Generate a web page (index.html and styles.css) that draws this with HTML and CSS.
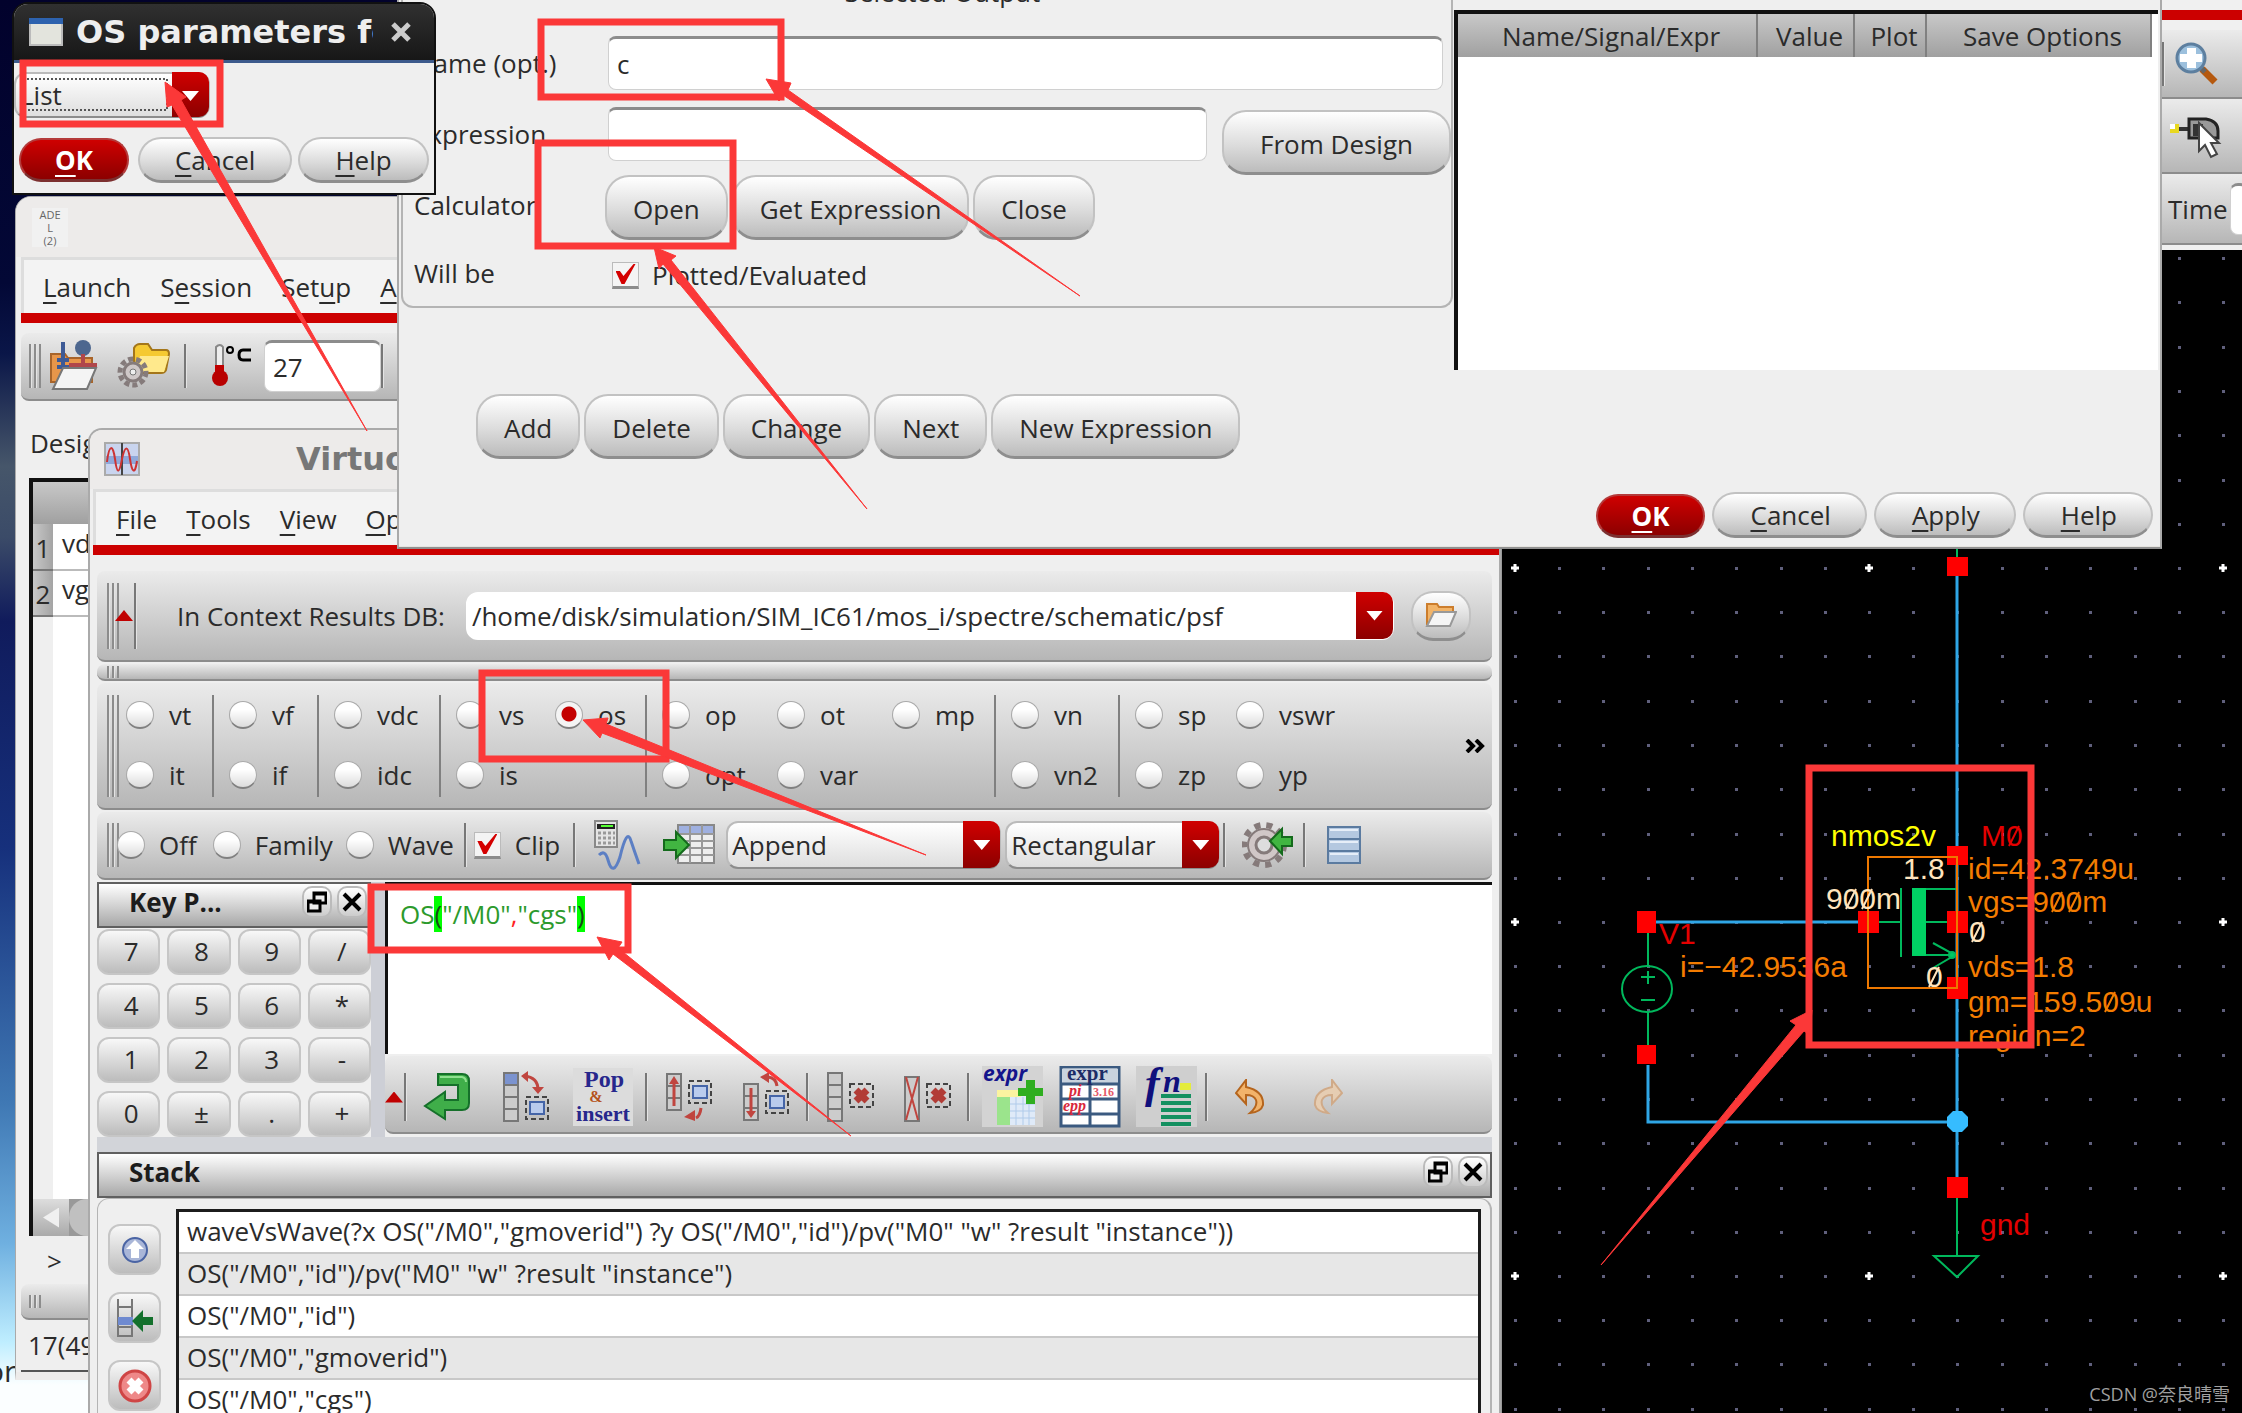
FILE: index.html
```html
<!DOCTYPE html>
<html lang="en">
<head>
<meta charset="utf-8">
<title>Virtuoso calculator</title>
<link rel="stylesheet" href="styles.css">
</head>
<body>
<main class="desktop">
  <span class="desktop-label">or</span>

  <!-- Schematic editor -->
  <section class="window schematic">
    <div class="schematic-tools">
      <div class="schematic-stripe"></div>
      <div class="schematic-bar"><span class="sep"></span>
        <svg class="icon-zoom" width="44" height="46" viewBox="0 0 44 46"><path d="M27 28l13 13" stroke="#b5590f" stroke-width="7"/><path d="M25 26l5 5" stroke="#666" stroke-width="5"/><circle cx="16" cy="17" r="14" fill="#9cc0dd" stroke="#5d7f9f" stroke-width="3"/><path d="M12 7h9v6h6v8h-6v6h-9v-6H5v-8h7z" fill="#fff"/></svg>
      </div>
      <div class="schematic-bar">
        <svg class="icon-probe" width="54" height="46" viewBox="0 0 54 46"><path d="M10 16h12" stroke="#333" stroke-width="4"/><path d="M2 11h9v9H2z" fill="#e8d820"/><path d="M2 11h5v5H2z" fill="#fff"/><path d="M21 6h17q12 2 12 12v7H21z" fill="#999" stroke="#222" stroke-width="3"/><path d="M25 11h10v12H25z" fill="#333"/><path d="M31 10v28l6-6 6 12 6-3-6-11h8z" fill="#fff" stroke="#444" stroke-width="2"/></svg>
      </div>
      <div class="schematic-bar"><label for="time">Time</label><input id="time" class="field" type="text"></div>
    </div>
    <div class="schematic-canvas"></div>
  </section>
  <svg class="circuit" width="100%" height="100%">
    <defs>
      <pattern id="grid" x="1514" y="567" width="354" height="354" patternUnits="userSpaceOnUse">
        <g id="dots" fill="#5f5f7c">
          <path id="row" d="M0 0h3v3h-3zM44 0h3v3h-3zM88 0h3v3h-3zM133 0h3v3h-3zM177 0h3v3h-3zM221 0h3v3h-3zM266 0h3v3h-3zM310 0h3v3h-3z"/>
          <use href="#row" y="44"/><use href="#row" y="88"/><use href="#row" y="133"/><use href="#row" y="177"/><use href="#row" y="221"/><use href="#row" y="266"/><use href="#row" y="310"/>
        </g>
      </pattern>
    </defs>
    <rect x="1502" y="250" width="740" height="1163" fill="url(#grid)"/>
    <g stroke="#fff" stroke-width="3"><path d="M1511 568h8M1515 564v8M1865 568h8M1869 564v8M2219 568h8M2223 564v8M2219 922h8M2223 918v8M1511 922h8M1515 918v8M1511 1276h8M1515 1272v8M1865 1276h8M1869 1272v8M2219 1276h8M2223 1272v8"/></g>
    <g fill="none" stroke="#2fa6e6" stroke-width="3"><path d="M1957 576V1177M1656 922H1858M1648 1065V1122H1957"/></g>
    <g fill="none" stroke="#00b85c" stroke-width="2">
      <path d="M1957 549v8M1648 933v33M1648 1012v33M1641 977h14M1648 971v13M1641 1000h14M1879 922h22M1901 888v69M1926 889h31M1926 922h21M1926 955h26M1933 943l22 12-22 13M1957 1198v57M1934 1256h44l-21 21z"/>
      <ellipse cx="1647" cy="989" rx="25" ry="23"/>
      <path d="M1912 888h14v68h-14z" fill="#00d264" stroke="none"/>
      <circle cx="1952" cy="955" r="3" fill="#00c864"/>
    </g>
    <g fill="#f00"><path d="M1947 557h21v19h-21zM1947 846h21v19h-21zM1947 911h21v22h-21zM1947 977h21v22h-21zM1858 911h21v22h-21zM1637 911h19v22h-19zM1637 1045h19v19h-19zM1947 1177h21v21h-21z"/></g>
    <path d="M1868 857h89v131h-89z" fill="none" stroke="#ee7800" stroke-width="2"/>
    <path d="M1953 1111h9l6 6v9l-6 6h-9l-6-6v-9z" fill="#36bcff"/>
    <g class="net-text">
      <text x="1831" y="846" fill="#ff0">nmos2v</text>
      <text x="1981" y="846" fill="#e40000">M0</text>
      <text x="1659" y="944" fill="#e40000">V1</text>
      <text x="1980" y="1235" fill="#e40000">gnd</text>
      <g fill="#ffe4bd"><text x="1903" y="879">1.8</text><text x="1826" y="909">900m</text><text x="1969" y="942">0</text><text x="1926" y="987">0</text></g>
      <path d="M1846 909l10-20M1862 909l10-20M1972 942l10-20M1929 987l10-20" stroke="#ffe4bd" stroke-width="2"/>
      <path d="M2009 846l10-20" stroke="#e40000" stroke-width="2"/>
      <path d="M2052 912l10-20M2069 912l10-20M2105 1012l10-20" stroke="#f47c00" stroke-width="2"/>
      <g fill="#f47c00"><text x="1968" y="879">id=42.3749u</text><text x="1968" y="912">vgs=900m</text><text x="1968" y="977">vds=1.8</text><text x="1968" y="1012">gm=159.509u</text><text x="1968" y="1046">region=2</text><text x="1680" y="977">i=−42.9536a</text></g>
    </g>
  </svg>

  <!-- Analog design environment -->
  <section class="window ade">
    <header class="titlebar"><div class="ade-logo">ADE<br>L<br>(2)</div></header>
    <nav class="menubar ade-menu"><button><u>L</u>aunch</button><button>S<u>e</u>ssion</button><button>Set<u>u</u>p</button><button><u>A</u>nalyses</button></nav>
    <div class="stripe"></div>
    <div class="toolbar ade-toolbar">
      <span class="grip"></span>
      <svg width="50" height="52" viewBox="0 0 50 52"><path d="M2 14h14l3 4h24v24H2z" fill="#e8964a" stroke="#a8642a" stroke-width="2"/><path d="M14 2v26M8 20h12M8 27h12" stroke="#3d5a96" stroke-width="4"/><circle cx="34" cy="8" r="8" fill="#4d678f"/><path d="M34 14v12M20 25h28" stroke="#b0474b" stroke-width="4"/><path d="M14 28h33l-9 21H4z" fill="#f4f4f4" stroke="#777" stroke-width="2"/></svg>
      <svg width="56" height="48" viewBox="0 0 56 48"><path d="M18 6q2-4 6-4h8l4 6h14q3 0 3 4l-3 16q-1 3-5 3H22q-4 0-4-4z" fill="#f5c932" stroke="#a4761a" stroke-width="2"/><path d="M24 14h29l-5 16H20z" fill="#ffe98c"/><circle cx="17" cy="30" r="13" fill="none" stroke="#857b7b" stroke-width="5" stroke-dasharray="5 3"/><circle cx="17" cy="30" r="9" fill="#cfc8c8" stroke="#857b7b" stroke-width="3"/><circle cx="17" cy="30" r="3" fill="#eee" stroke="#777"/></svg>
      <span class="sep"></span>
      <svg class="thermo" width="44" height="46" viewBox="0 0 44 46"><path d="M8 4q4-4 7 0v26h-7z" fill="#eee" stroke="#888" stroke-width="2"/><path d="M7 22h9v10h-9z" fill="#c00000"/><circle cx="12" cy="35" r="8" fill="#b80000"/><circle cx="22" cy="7" r="3" fill="none" stroke="#000" stroke-width="2"/><path d="M43 7h-8q-4 0-4 5t4 5h8" fill="none" stroke="#000" stroke-width="3"/></svg>
      <input class="field temp" type="text" value="27" aria-label="Temperature">
      <span class="sep"></span>
    </div>
    <div class="vars-label">Design Variables</div>
    <div class="vars">
      <table><colgroup><col class="num"><col></colgroup><thead><tr><th></th><th></th></tr></thead><tbody><tr><th>1</th><td>vds</td></tr><tr><th>2</th><td>vgs</td></tr></tbody></table>
      <div class="hscroll"><button aria-label="Scroll left"></button><i></i></div>
    </div>
    <div class="prompt">&gt;</div>
    <div class="toolbar tiny"><span class="grip"></span></div>
    <div class="status">17(49)</div>
  </section>

  <!-- Calculator -->
  <section class="window calc">
    <header class="titlebar">
      <svg width="36" height="34" viewBox="0 0 36 34"><path d="M1 1h34v32H1z" fill="#c9d4ee" stroke="#aaa" stroke-width="2"/><path d="M2 14h32v8H2z" fill="#8fa8da"/><path d="M18 1v32" stroke="#444" stroke-width="2"/><path d="M3 20C5 2 9 2 11 17s4 16 7 0M18 17c3-14 6-14 8 0s5 16 7 2" fill="none" stroke="#c33" stroke-width="2"/></svg>
      <h1>Virtuoso (R) Visualization</h1>
    </header>
    <nav class="menubar calc-menu"><button><u>F</u>ile</button><button><u>T</u>ools</button><button><u>V</u>iew</button><button><u>O</u>ptions</button></nav>
    <div class="stripe"></div>
    <div class="calc-body">
      <div class="toolbar db-bar">
        <span class="grip"></span><span class="tri"></span><span class="sep"></span>
        <label for="db">In Context Results DB:</label>
        <span class="combo db-combo"><select id="db"><option>/home/disk/simulation/SIM_IC61/mos_i/spectre/schematic/psf</option></select></span>
        <button class="btn folder-btn" aria-label="Open folder"><svg width="32" height="28" viewBox="0 0 32 28"><path d="M2 24V3h10l2 3h14v8" fill="#f2b468" stroke="#cc7d2c" stroke-width="2"/><path d="M9 11h22l-6 14H2z" fill="#f5f5f5" stroke="#999" stroke-width="2"/></svg></button>
      </div>
      <div class="toolbar thin"><span class="grip"></span></div>
      <div class="toolbar radios">
        <span class="grip"></span>
        <div class="group g1"><label><input type="radio" name="fn">vt</label><label><input type="radio" name="fn">it</label></div>
        <div class="group g2"><label><input type="radio" name="fn">vf</label><label><input type="radio" name="fn">if</label></div>
        <div class="group g3"><label><input type="radio" name="fn">vdc</label><label><input type="radio" name="fn">idc</label></div>
        <div class="group g4"><label><input type="radio" name="fn">vs</label><label><input type="radio" name="fn" checked>os</label><label><input type="radio" name="fn">is</label></div>
        <div class="group g5"><label><input type="radio" name="fn">op</label><label><input type="radio" name="fn">ot</label><label><input type="radio" name="fn">mp</label><label><input type="radio" name="fn">opt</label><label><input type="radio" name="fn">var</label></div>
        <div class="group g6"><label><input type="radio" name="fn">vn</label><label><input type="radio" name="fn">vn2</label></div>
        <div class="group g7"><label><input type="radio" name="fn">sp</label><label><input type="radio" name="fn">vswr</label><label><input type="radio" name="fn">zp</label><label><input type="radio" name="fn">yp</label></div>
        <button class="more" aria-label="More"><svg width="20" height="14" viewBox="0 0 20 14"><path d="M2 1l6 6-6 6M11 1l6 6-6 6" fill="none" stroke="#000" stroke-width="4"/></svg></button>
      </div>
      <div class="toolbar options">
        <span class="grip"></span>
        <label class="off"><input type="radio" name="sel">Off</label>
        <label><input type="radio" name="sel">Family</label>
        <label class="wave"><input type="radio" name="sel">Wave</label>
        <span class="sep"></span>
        <label><input type="checkbox" checked>Clip</label>
        <span class="sep"></span>
        <svg class="i-calc" width="50" height="50" viewBox="0 0 50 50"><path d="M2 1h22v26H2z" fill="#e4e4e4" stroke="#888" stroke-width="2"/><path d="M4 4h18v5H4z" fill="#222"/><path d="M8 6h12" stroke="#5f3" stroke-width="2"/><path d="M5 13h17M5 18h17M5 23h17" stroke="#999" stroke-width="3" stroke-dasharray="3 2"/><path d="M4 34q6-6 9 5 5 18 12-3 7-30 11-16 4 12 8 23" fill="none" stroke="#5c7fc4" stroke-width="3" transform="translate(2 1)"/></svg>
        <svg class="i-table" width="54" height="44" viewBox="0 0 54 44"><path d="M16 2h36v38H16z" fill="#eee" stroke="#888" stroke-width="2"/><path d="M17 3h34v7H17z" fill="#9fb0e0"/><path d="M28 2v38M40 2v38M16 11h36M16 18h36M16 25h36M16 32h36" stroke="#999" stroke-width="2"/><path d="M2 17h12V9l13 13-13 13v-8H2z" fill="#41b541" stroke="#146a1c" stroke-width="2"/></svg>
        <span class="combo append"><select aria-label="Plot mode"><option>Append</option></select></span>
        <span class="combo rect"><select aria-label="Plot type"><option>Rectangular</option></select></span>
        <span class="sep"></span>
        <svg class="i-gear" width="52" height="48" viewBox="0 0 52 48"><circle cx="22" cy="24" r="20" fill="none" stroke="#857a7a" stroke-width="6" stroke-dasharray="6 6"/><circle cx="22" cy="24" r="16" fill="#d0c7c7" stroke="#857a7a" stroke-width="2"/><circle cx="22" cy="24" r="8" fill="#ddd" stroke="#857a7a" stroke-width="3"/><path d="M50 16H40V8L28 20l12 13v-8h10z" fill="#41b541" stroke="#146a1c" stroke-width="2"/></svg>
        <span class="sep"></span>
        <svg class="i-db" width="36" height="40" viewBox="0 0 36 40"><path d="M2 2h32v36H2z" fill="#b4c8e0" stroke="#5b7ba0" stroke-width="2"/><path d="M2 14h32M2 26h32" stroke="#5b7ba0" stroke-width="2"/><path d="M4 5h28M4 17h28M4 29h28" stroke="#e6eef8" stroke-width="2"/></svg>
      </div>
      <div class="middle">
        <section class="keypad">
          <header class="dock"><h2>Key P...</h2><button class="dock-btn" aria-label="Float"><svg width="20" height="22" viewBox="0 0 20 22"><path d="M7 2h12v10H7zM7 3h12M1 10h12v10H1zM1 11h12" fill="#eee" stroke="#000" stroke-width="3"/></svg></button><button class="dock-btn" aria-label="Close"><svg width="20" height="20" viewBox="0 0 20 20"><path d="M2 2l16 16M18 2L2 18" stroke="#000" stroke-width="4"/></svg></button></header>
          <div class="keys"><button>7</button><button>8</button><button>9</button><button>/</button><button>4</button><button>5</button><button>6</button><button>*</button><button>1</button><button>2</button><button>3</button><button>-</button><button>0</button><button>±</button><button>.</button><button>+</button></div>
        </section>
        <section class="editor">
          <div class="buffer" contenteditable="true" spellcheck="false">OS<mark>(</mark>"/M0"<em>,</em>"cgs"<mark>)</mark></div>
          <div class="toolbar edit-bar">
            <span class="tri"></span><span class="sep"></span>
            <svg class="e1" width="48" height="50" viewBox="0 0 48 50"><path d="M15 2h24q7 0 7 7v22q0 7-7 7H22v9L2 34l20-14v8h13V13H15z" fill="#3fae49" stroke="#15702a" stroke-width="2"/><path d="M17 5h22q4 1 4 5" fill="none" stroke="#8fe08f" stroke-width="2"/></svg>
            <svg class="e2" width="48" height="52" viewBox="0 0 48 52"><path d="M2 2h14v48H2zM2 14h14M2 26h14M2 38h14" fill="#ccc" stroke="#777" stroke-width="2"/><path d="M3 3h12v10H3z" fill="#7b93cf"/><path d="M22 5q14 1 14 14" fill="none" stroke="#c0453f" stroke-width="3"/><path d="M30 16h12l-6 7zM26 0v11l-7-6z" fill="#c0453f"/><path d="M24 26h22v22H24z" fill="none" stroke="#444" stroke-width="2" stroke-dasharray="5 3"/><path d="M28 31h14v12H28z" fill="#b9cbed" stroke="#4565a8" stroke-width="2"/></svg>
            <svg class="e3" width="60" height="58" viewBox="0 0 60 58"><path d="M0 0h60v58H0z" fill="#dcdcdc"/><g font-family="Liberation Serif" font-weight="700" text-anchor="middle"><text x="31" y="19" font-size="24" fill="#27278c">Pop</text><text x="23" y="34" font-size="16" fill="#b5521a">&amp;</text><text x="30" y="53" font-size="22" fill="#27278c">insert</text></g></svg>
            <span class="sep"></span>
            <svg class="e4" width="48" height="50" viewBox="0 0 48 50"><path d="M2 2h14v36H2zM2 14h14M2 26h14" fill="#ccc" stroke="#777" stroke-width="2"/><path d="M9 34V8M31 46q4-2 5-10" fill="none" stroke="#c0453f" stroke-width="3"/><path d="M4 12h10L9 4zM30 38v11l-11-4z" fill="#c0453f"/><path d="M24 9h22v22H24z" fill="none" stroke="#444" stroke-width="2" stroke-dasharray="5 3"/><path d="M28 14h14v12H28z" fill="#b9cbed" stroke="#4565a8" stroke-width="2"/></svg>
            <svg class="e5" width="48" height="50" viewBox="0 0 48 50"><path d="M2 12h14v36H2zM2 24h14M2 36h14" fill="#ccc" stroke="#777" stroke-width="2"/><path d="M9 16v26M35 14q-1-8-9-9" fill="none" stroke="#c0453f" stroke-width="3"/><path d="M4 39h10l-5 7zM27 0v11l-9-6z" fill="#c0453f"/><path d="M24 19h22v22H24z" fill="none" stroke="#444" stroke-width="2" stroke-dasharray="5 3"/><path d="M28 24h14v12H28z" fill="#b9cbed" stroke="#4565a8" stroke-width="2"/></svg>
            <span class="sep"></span>
            <svg class="e6" width="50" height="52" viewBox="0 0 50 52"><path d="M2 2h14v48H2zM2 14h14M2 26h14M2 38h14" fill="#ccc" stroke="#777" stroke-width="2"/><path d="M24 13h23v23H24z" fill="none" stroke="#444" stroke-width="2" stroke-dasharray="5 3"/><path d="M30 19l11 11M41 19L30 30" stroke="#b23c36" stroke-width="7"/></svg>
            <svg class="e7" width="50" height="52" viewBox="0 0 50 52"><path d="M2 6h14v44H2z" fill="#ccc" stroke="#777" stroke-width="2"/><path d="M3 6l12 43M15 6L3 49" stroke="#c0453f" stroke-width="2"/><path d="M24 13h23v23H24z" fill="none" stroke="#444" stroke-width="2" stroke-dasharray="5 3"/><path d="M30 19l11 11M41 19L30 30" stroke="#b23c36" stroke-width="7"/></svg>
            <span class="sep"></span>
            <svg class="e8" width="62" height="62" viewBox="0 0 62 62"><path d="M0 0h61v61H0z" fill="#d3d3d3"/><path d="M15 24h38v35H15z" fill="#dfeaf8"/><path d="M15 24h24v7H15z" fill="#fbf3a0"/><path d="M15 31h13v28H15z" fill="#9be48c"/><path d="M28 38h25M28 45h25M28 52h25M34 31v28M41 31v28M47 31v28" stroke="#b0cbea"/><path d="M44 14h9v8h8v8h-8v8h-9v-8h-8v-8h8z" fill="#2fae20"/><text x="1" y="15" font-family="Open Sans" font-size="21" font-weight="700" font-style="italic" fill="#14148c">expr</text></svg>
            <svg class="e9" width="62" height="62" viewBox="0 0 62 62"><path d="M2 1h58v59H2z" fill="#fff" stroke="#3b5a80" stroke-width="3"/><path d="M3 3h56v14H3z" fill="#c9d3de"/><path d="M2 18h58M2 33h58M2 48h58M31 18v42" stroke="#3b5a80" stroke-width="3"/><g font-family="Liberation Serif" font-weight="700"><text x="8" y="14" font-size="21" fill="#1c2c66">expr</text><text x="10" y="30" font-size="16" font-style="italic" fill="#d8283c">pi</text><text x="4" y="45" font-size="16" font-style="italic" fill="#d8283c">epp</text><text x="34" y="30" font-size="12" fill="#e45a6a">3.16</text></g></svg>
            <svg class="e10" width="62" height="62" viewBox="0 0 62 62"><path d="M0 0h61v61H0z" fill="#cfcfcf"/><path d="M44 17h11v7H44z" fill="#e4ec3c"/><path d="M25 30h30M25 37h30M25 44h30M25 51h30M25 58h30" stroke="#149060" stroke-width="4"/><text x="9" y="32" font-family="Liberation Serif" font-size="44" font-weight="700" font-style="italic" fill="#10107c">f</text><text x="27" y="26" font-family="Liberation Serif" font-size="32" font-weight="700" font-style="italic" fill="#10107c">n</text></svg>
            <span class="sep"></span>
            <svg class="e11" width="30" height="36" viewBox="0 0 30 36"><path d="M1 14L11 1v7q18 4 17 18-2 7-13 8 8-7 6-13-2-5-10-5v9z" fill="#f2b36a" stroke="#b5651d" stroke-width="2"/></svg>
            <svg class="e12" width="30" height="36" viewBox="0 0 30 36"><path d="M29 14L19 1v7Q1 12 2 26q2 7 13 8-8-7-6-13 2-5 10-5v9z" fill="#e6cdb2" stroke="#d0aa88" stroke-width="2"/></svg>
          </div>
        </section>
      </div>
      <section class="stack">
        <header class="dock"><h2>Stack</h2><button class="dock-btn" aria-label="Float"><svg width="20" height="22" viewBox="0 0 20 22"><path d="M7 2h12v10H7zM7 3h12M1 10h12v10H1zM1 11h12" fill="#eee" stroke="#000" stroke-width="3"/></svg></button><button class="dock-btn" aria-label="Close"><svg width="20" height="20" viewBox="0 0 20 20"><path d="M2 2l16 16M18 2L2 18" stroke="#000" stroke-width="4"/></svg></button></header>
        <div class="stack-body">
          <div class="stack-tools">
            <button aria-label="Up"><svg width="28" height="28" viewBox="0 0 28 28"><circle cx="14" cy="14" r="12" fill="#a9b6d8" stroke="#4a64a4" stroke-width="2"/><path d="M14 4l9 9h-5v9h-8v-9H5z" fill="#fff"/></svg></button>
            <button aria-label="Insert"><svg width="40" height="40" viewBox="0 0 40 40"><path d="M3 1v37h14V1M3 9h14M3 29h14" fill="none" stroke="#777" stroke-width="2"/><path d="M3 19h15v8H3z" fill="#6f8ad0"/><path d="M38 19H28v-7l-11 11 11 11v-7h10z" fill="#13702c"/></svg></button>
            <button aria-label="Delete"><svg width="34" height="34" viewBox="0 0 34 34"><circle cx="17" cy="17" r="15" fill="#e88" stroke="#cf4545" stroke-width="3"/><path d="M11 11l12 12M23 11L11 23" stroke="#fff" stroke-width="7"/></svg></button>
          </div>
          <ul><li>waveVsWave(?x OS("/M0","gmoverid") ?y OS("/M0","id")/pv("M0" "w" ?result "instance"))</li><li>OS("/M0","id")/pv("M0" "w" ?result "instance")</li><li>OS("/M0","id")</li><li>OS("/M0","gmoverid")</li><li>OS("/M0","cgs")</li></ul>
        </div>
      </section>
    </div>
  </section>

  <!-- Setting outputs -->
  <section class="window outputs">
    <div class="outputs-top">
      <form class="selected">
        <h2>Selected Output</h2>
        <label for="name">Name (opt.)</label><input id="name" class="field" type="text" value="c">
        <label for="expr">Expression</label><div class="expr-row"><input id="expr" class="field" type="text"><button type="button" class="btn big from">From Design</button></div>
        <span class="lbl">Calculator</span><div class="calc-row"><button type="button" class="btn big">Open</button><button type="button" class="btn big">Get Expression</button><button type="button" class="btn big">Close</button></div>
        <span class="lbl will">Will be</span><label class="plotted"><input type="checkbox" checked>Plotted/Evaluated</label>
      </form>
      <div class="outputs-list">
        <table><colgroup><col class="c1"><col class="c2"><col class="c3"><col class="c4"></colgroup><thead><tr><th>Name/Signal/Expr</th><th>Value</th><th>Plot</th><th>Save Options</th></tr></thead></table>
      </div>
    </div>
    <div class="outputs-actions"><button class="btn big">Add</button><button class="btn big">Delete</button><button class="btn big">Change</button><button class="btn big">Next</button><button class="btn big">New Expression</button></div>
    <div class="outputs-footer"><button class="btn pill primary"><u>O</u>K</button><button class="btn pill"><u>C</u>ancel</button><button class="btn pill"><u>A</u>pply</button><button class="btn pill"><u>H</u>elp</button></div>
  </section>

  <!-- OS parameters -->
  <section class="window params">
    <header>
      <svg width="34" height="28" viewBox="0 0 34 28"><path d="M1 1h32v26H1z" fill="#e3e4dd" stroke="#bbb" stroke-width="2"/><path d="M0 0h34v6H0z" fill="#2d62ae"/></svg>
      <h1>OS parameters for</h1>
      <button aria-label="Close"><svg width="20" height="20" viewBox="0 0 20 20"><path d="M2 2l16 16M18 2L2 18" stroke="#ccc" stroke-width="5"/></svg></button>
    </header>
    <span class="combo list"><select aria-label="Parameter"><option>List</option></select></span>
    <div class="params-footer"><button class="btn pill primary"><u>O</u>K</button><button class="btn pill"><u>C</u>ancel</button><button class="btn pill"><u>H</u>elp</button></div>
  </section>

  <!-- Annotations -->
  <svg class="notes" width="100%" height="100%">
    <path d="M27 79h140v31H27" fill="none" stroke="#555" stroke-width="2" stroke-dasharray="2 2"/>
    <g fill="none" stroke="#fb3838" stroke-width="7">
      <rect x="23" y="63" width="197" height="61"/>
      <rect x="541" y="22" width="240" height="75"/>
      <rect x="538" y="143" width="195" height="103"/>
      <rect x="482" y="673" width="184" height="86"/>
      <rect x="371" y="887" width="257" height="63"/>
      <rect x="1809" y="768" width="222" height="277"/>
    </g>
    <g fill="#fb3838" stroke="#fb3838" stroke-linejoin="round">
      <path d="M165 82l21 15-5 3 186 331L172 105l-5 2z"/>
      <path d="M766 79l25 4-3 7 292 206L783 95l-4 6z"/>
      <path d="M654 247l22 9-5 4 196 249L663 264l-4 5z"/>
      <path d="M583 720l25-2-2 6 320 131-324-122-2 5z"/>
      <path d="M597 937l25 5-4 6 233 188-238-182-4 6z"/>
      <path d="M1812 1010l-22 11 6 4-195 240 203-234 6 4z"/>
    </g>
  </svg>
  <p class="watermark">CSDN @奈良晴雪</p>
</main>
</body>
</html>
```

FILE: styles.css
```css
* { box-sizing: border-box; }
body { margin: 0; }
body, button, input, select { font-family: "Open Sans", "Noto Sans CJK SC", sans-serif; font-size: 26px; line-height: 36px; color: #2b2b2b; }
h1, h2, p, ul { margin: 0; padding: 0; font-size: 26px; }
button { border: 0; padding: 0; background: none; }
u { text-decoration-thickness: 2px; text-underline-offset: 5px; text-decoration-skip-ink: none; }
svg { display: block; flex: none; }

.desktop { position: relative; height: 100vh; overflow: hidden; background: linear-gradient(#02022c 0, #030836 20%, #0a1648 25%, #46566a 33%, #3b4b68 38%, #101b5c 44%, #16307c 60%, #3f78b4 78%, #6fb0e0 88%, #bfeeff 95%, #fbfeff 98%); }
.desktop-label { position: absolute; left: -14px; bottom: 24px; font-size: 30px; }
.window { position: absolute; background: #efefef; display: flex; flex-direction: column; overflow: hidden; }

/* Shared parts */
.titlebar { flex: none; height: 60px; background: #edebea; display: flex; align-items: center; }
.titlebar h1 { font: bold 32px/36px "DejaVu Sans", sans-serif; color: #777; white-space: nowrap; }
.menubar { flex: none; height: 56px; display: flex; align-items: center; background: #f3f3f3; border: solid #ddd; border-width: 3px 0 0 3px; }
.stripe { flex: none; height: 10px; background: #c00; }
.toolbar { flex: none; display: flex; align-items: center; background: linear-gradient(#ebebeb, #b6b6b6); border-bottom: 2px solid #8c8c8c; border-radius: 8px; }
.grip { flex: none; width: 12px; background: repeating-linear-gradient(90deg, #8c8c8c 0 2px, #e4e4e4 2px 3px, transparent 3px 5px); }
.sep { flex: none; width: 3px; height: 44px; background: #777; border-right: 1px solid #e4e4e4; }
.tri { flex: none; width: 18px; height: 11px; background: #c00000; clip-path: polygon(50% 0, 100% 100%, 0 100%); }
.field { background: #fff; border: 1px solid #d0d0d0; border-top: 3px solid #8c8c8c; border-radius: 8px; padding: 0 8px; min-width: 0; outline: 0; }
.btn { border: 2px solid #c2c2c2; border-bottom: 3px solid #8e8e8e; background: linear-gradient(#fff, #dcdcdc 55%, #bcbcbc); white-space: nowrap; }
.big { height: 65px; padding: 4px 26px 0; border-radius: 24px; }
.pill { height: 46px; padding: 0 35px; border-radius: 23px; }
.primary { height: 44px; padding: 0 34px; background: linear-gradient(#cf0000, #8c0000); color: #fff; font-weight: bold; border-color: #b43a3a; border-bottom-color: #7c3030; }
.combo { position: relative; flex: none; display: flex; }
.combo select { appearance: none; width: 100%; height: 48px; margin: 0; padding: 0 40px 0 4px; border: 2px solid #bbb; border-bottom-color: #8c8c8c; border-radius: 12px; background: linear-gradient(#fff, #dedede); outline: 0; }
.combo::before { content: ""; position: absolute; right: 1px; top: 0; bottom: 1px; width: 37px; border-radius: 0 10px 10px 0; background: linear-gradient(#d00000, #8c0000); pointer-events: none; }
.combo::after { content: ""; position: absolute; right: 11px; top: 19px; width: 17px; height: 10px; background: #fff; clip-path: polygon(0 0, 100% 0, 50% 100%); pointer-events: none; }
label input { flex: none; appearance: none; margin: 0; }
input[type=radio] { width: 28px; height: 28px; border-radius: 50%; border: 1px solid #aaa; border-bottom: 2px solid #808080; background: linear-gradient(#fff 30%, #dcdcdc); }
input[type=radio]:checked { background: radial-gradient(circle at 50% 48%, #c40000 0 7px, #f4f4f4 8px); }
input[type=checkbox] { width: 27px; height: 27px; border: 1px solid #bbb; border-bottom: 3px solid #8c8c8c; background: #f4f4f4; display: grid; place-items: center; }
input[type=checkbox]::before { content: ""; width: 20px; height: 20px; background: #d40000; clip-path: polygon(0 35%, 22% 35%, 40% 60%, 90% 0, 100% 0, 45% 100%, 30% 100%); }

/* Schematic */
.schematic { left: 1501px; right: 0; top: 0; bottom: 0; background: #000; border-left: 1px solid #999; }
.schematic-tools { padding-top: 10px; background: #f0f0f0; flex: none; height: 250px; display: flex; flex-direction: column; }
.schematic-stripe { height: 10px; margin-bottom: 10px; background: #c00; }
.schematic-bar { height: 75px; display: flex; align-items: center; padding-left: 666px; background: linear-gradient(#ebebeb, #b6b6b6); border-bottom: 2px solid #8c8c8c; }
.schematic-bar:nth-child(2) { height: 69px; padding-left: 660px; }
.schematic-bar:last-child { height: 71px; }
.icon-zoom { margin-left: 10px; }
.schematic-bar .field { margin-left: 2px; width: 100px; height: 52px; }
.circuit, .notes { position: absolute; left: 0; top: 0; pointer-events: none; }
.net-text { font: 30px "Liberation Sans", sans-serif; }

/* ADE */
.ade { left: 15px; top: 196px; bottom: 33px; width: 420px; padding-left: 5px; border: 1px solid #aaa; border-top-left-radius: 16px; border-bottom: 8px solid #edebea; }
.ade .titlebar { margin-left: -5px; padding-left: 16px; }
.ade-logo { width: 36px; background: #f1f1f1; font-size: 11px; line-height: 13px; text-align: center; color: #666; }
.ade-menu { padding-left: 19px; gap: 29px; }
.ade-toolbar { height: 68px; margin-top: 10px; padding-left: 8px; }
.ade-toolbar .grip { height: 44px; margin-right: 8px; }
.ade-toolbar svg + svg { margin-left: 17px; }
.ade-toolbar .sep { margin-left: 12px; }
.ade-toolbar .thermo { margin: 0 12px 0 21px; }
.temp { width: 117px; height: 52px; }
.ade-toolbar .temp + .sep { margin-left: 0; }
.vars-label { margin: 24px 0 17px 9px; }
.vars { flex: 1; margin-left: 8px; border: solid #111; border-width: 4px 0 0 4px; background: linear-gradient(90deg, #efefef 20px, #fff 20px); display: flex; flex-direction: column; justify-content: space-between; }
.vars table { border-collapse: collapse; width: 100%; table-layout: fixed; }
.vars .num { width: 20px; }
.vars th, .vars td { padding: 0 0 8px 9px; height: 46px; text-align: left; background: #fff; border-bottom: 2px solid #bbb; }
.vars th { padding: 2px 0 0; font-weight: normal; text-align: center; background: linear-gradient(90deg, #c8c8c8, #a4a4a4); border-bottom: 2px solid #777; }
.vars thead th { height: 42px; background: linear-gradient(#c8c8c8, #a0a0a0); border: 0; }
.hscroll { height: 37px; display: flex; background: #999; }
.hscroll button { width: 36px; background: linear-gradient(#ddd, #aaa); display: grid; place-items: center; }
.hscroll button::before { content: ""; width: 16px; height: 20px; background: #f0f0f0; clip-path: polygon(100% 0, 100% 100%, 0 50%); }
.hscroll i { flex: 1; background: #c0c0c0; border-radius: 18px; }
.prompt { margin: 7px 0 5px 26px; }
.tiny { height: 36px; padding-left: 8px; }
.tiny .grip { height: 13px; }
.status { padding: 7px 0 7px 7px; border-bottom: 2px solid #555; }

/* Calculator */
.calc { left: 88px; top: 428px; bottom: 0; width: 1413px; border: 2px solid #aaa; border-bottom: 0; border-top-left-radius: 14px; }
.calc .titlebar { padding: 0 0 2px 14px; height: 59px; gap: 156px; }
.calc-menu, .calc .stripe { margin: 0 0 0 3px; }
.calc-menu { padding-left: 20px; gap: 29px; }
.calc-body { flex: 1; padding: 16px 7px 0; display: flex; flex-direction: column; gap: 2px; }
.db-bar { height: 91px; padding-left: 10px; }
.db-bar .grip { height: 66px; }
.db-bar .tri { margin-left: -4px; }
.db-bar .sep { height: 66px; margin: 0 40px 0 1px; }
.db-combo { flex: 1; margin: 0 17px 0 21px; }
.db-combo select { background: #fff; border-color: #fff; }
.folder-btn { width: 60px; height: 50px; margin-right: 21px; border-radius: 22px; display: grid; place-items: center; }
.thin { height: 17px; padding-left: 10px; }
.thin .grip { height: 12px; }
.radios { height: 127px; padding: 0 7px 0 10px; }
.radios .grip, .group { height: 102px; }
.group { display: grid; grid-auto-rows: 36px; gap: 24px 0; align-content: center; padding: 0 0 2px 15px; border-right: 2px solid #808080; }
.radios label, .options label { display: flex; align-items: center; gap: 15px; }
.g1 { width: 95px; padding-left: 7px; }
.g2 { width: 105px; }
.g3 { width: 122px; }
.g4 { width: 206px; grid-template-columns: 99px 1fr; }
.g5 { width: 349px; grid-template-columns: 115px 115px 1fr; }
.g6 { width: 124px; }
.g7 { flex: 1; border: 0; grid-template-columns: 101px 1fr; }
.options { height: 68px; padding-left: 10px; }
.options .grip { height: 44px; margin-right: -2px; }
.options label { margin-right: 13px; gap: 14px; }
.options .off { margin-right: 16px; }
.options .wave { margin-right: 10px; }
.options .sep + label { margin-left: 7px; }
.i-calc { margin-left: 17px; }
.i-table { margin: 0 10px 0 19px; }
.append { width: 275px; }
.rect { width: 215px; margin: 0 3px 0 4px; }
.i-gear { margin: 0 9px 0 16px; }
.i-db { margin-left: 20px; }

.middle { flex: none; height: 255px; display: flex; }
.keypad { width: 288px; display: flex; flex-direction: column; border-right: 14px solid #cdcfd6; }
.dock { flex: none; height: 46px; padding: 0 2px 0 30px; display: flex; align-items: center; gap: 5px; border: 2px solid #606060; background: linear-gradient(#fff, #a8a8a8); }
.dock h2 { flex: 1; padding-bottom: 6px; color: #1c1c1c; white-space: nowrap; }
.dock-btn { width: 30px; height: 32px; margin-bottom: 6px; border: 2px solid #bbb; border-radius: 10px; background: linear-gradient(#fff, #ccc); display: grid; place-items: center; }
.keys { flex: 1; padding-top: 1px; display: grid; grid-template-columns: repeat(4, 1fr); gap: 8px 7px; }
.keys button, .stack-tools button { border: 2px solid #c6c6c6; border-radius: 12px; background: linear-gradient(#f8f8f8, #bcbcbc); }
.keys button { padding: 0 0 2px 5px; }
.editor { flex: 1; display: flex; flex-direction: column; gap: 2px; }
.buffer { flex: 1; padding: 11px 12px; background: #fff; border: solid #111; border-width: 3px 0 0 3px; color: #2c9a2c; outline: 0; }
.buffer mark { background: #0f0; color: #164a16; }
.buffer em { color: #f22; font-style: normal; }
.edit-bar { height: 78px; margin-bottom: 3px; padding-top: 6px; }
.edit-bar .sep { height: 48px; margin-left: 1px; }
.edit-bar .e1 { margin: 0 31px 0 16px; }
.e3 { margin: 0 11px 0 23px; }
.e4 { margin: 0 29px 0 17px; }
.e5 { margin-right: 15px; }
.e6 { margin: 0 27px 0 17px; }
.e7 { margin-right: 13px; }
.e8, .e9 { margin-right: 15px; }
.e8 { margin-left: 12px; }
.e10 { margin-right: 6px; }
.e11 { margin: 0 48px 0 27px; }
.stack { flex: 1; display: flex; flex-direction: column; margin-top: -2px; border-top: 15px solid #d2d4d9; }
.stack-body { flex: 1; display: flex; gap: 15px; padding: 10px 9px 0 10px; border: solid #b4b4b4; border-width: 1px 2px 0 1px; border-radius: 12px 12px 0 0; }
.stack-tools { width: 53px; padding-top: 15px; display: flex; flex-direction: column; gap: 17px; }
.stack-tools button { height: 51px; display: grid; place-items: center; }
.stack ul { flex: 1; list-style: none; background: #fff; border: 3px solid #1c1c1c; border-bottom: 0; }
.stack li { height: 42px; padding: 1px 8px 0; border-bottom: 2px solid #c8c8c8; white-space: nowrap; }
.stack li:nth-child(even) { background: #e7e7e7; }

/* Outputs */
.outputs { left: 397px; top: -28px; width: 1765px; height: 577px; border: 2px solid #aaa; border-bottom: 2px solid #909090; }
.outputs-top { display: flex; height: 395px; }
.selected { width: 1052px; height: 334px; margin-left: 2px; padding: 0 8px 0 11px; border: solid #b4b4b4; border-width: 0 2px 2px; border-radius: 0 0 12px 12px; display: grid; grid-template-columns: 194px 1fr; grid-template-rows: 36px 97px 68px 64px 1fr; align-content: start; }
.selected h2 { grid-column: 1 / 3; padding-left: 28px; font-weight: normal; text-align: center; }
.selected > label { padding-top: 9px; }
.selected .lbl { padding-top: 12px; }
.selected .will { padding-top: 16px; }
.selected > :nth-child(2), .selected #name { margin-top: 26px; }
.selected #name { height: 54px; }
.expr-row { display: flex; gap: 15px; margin-right: -8px; align-items: flex-end; }
.expr-row .field { flex: 1; height: 54px; align-self: flex-start; }
.from { padding: 4px 36px 0; }
.calc-row { display: flex; gap: 4px; margin-left: -3px; }
.selected .plotted { margin-top: 6px; padding: 12px 0 0 4px; display: flex; gap: 13px; align-items: center; align-self: start; }
.outputs-list { flex: 1; margin: 36px 2px -1px 1px; background: #fff; border: solid #111; border-width: 4px 0 0 4px; }
.outputs-list table { width: 694px; border-collapse: collapse; table-layout: fixed; background: linear-gradient(#c8c8c8, #a0a0a0); }
.outputs-list th { height: 43px; padding: 0 0 0 8px; font-weight: normal; border-right: 2px solid #808080; }
.c1 { width: 299px; }
.c2 { width: 97px; }
.c3 { width: 72px; }
.outputs-actions { display: flex; gap: 4px; padding: 25px 0 0 77px; }
.outputs-footer { flex: 1; display: flex; justify-content: flex-end; align-items: flex-end; gap: 7px; padding: 0 7px 8px; border-bottom: 1px solid #e6e4e0; }
.outputs-footer .pill + .pill { padding: 0 34px 0 36px; }

/* OS parameters */
.params { left: 12px; top: 2px; width: 424px; height: 193px; border: 2px solid #111; border-radius: 16px 16px 0 0; }
.params header { flex: none; height: 59px; padding: 0 23px 0 15px; display: flex; align-items: center; gap: 13px; background: linear-gradient(#303030, #171717); border-bottom: 3px solid #3c5a8c; }
.params h1 { flex: 1; min-width: 0; margin-right: 5px; overflow: hidden; white-space: nowrap; font: bold 32px/40px "DejaVu Sans", sans-serif; color: #eee; }
.list { width: 196px; margin: 9px 0 0; }
.list select { height: 46px; }
.params-footer { display: flex; align-items: center; gap: 6px; padding: 19px 5px 0; }
.params-footer .primary { margin-right: 3px; }

.watermark { position: absolute; right: 12px; bottom: 6px; font-size: 18px; line-height: 26px; color: #a0a0a0; }
```
